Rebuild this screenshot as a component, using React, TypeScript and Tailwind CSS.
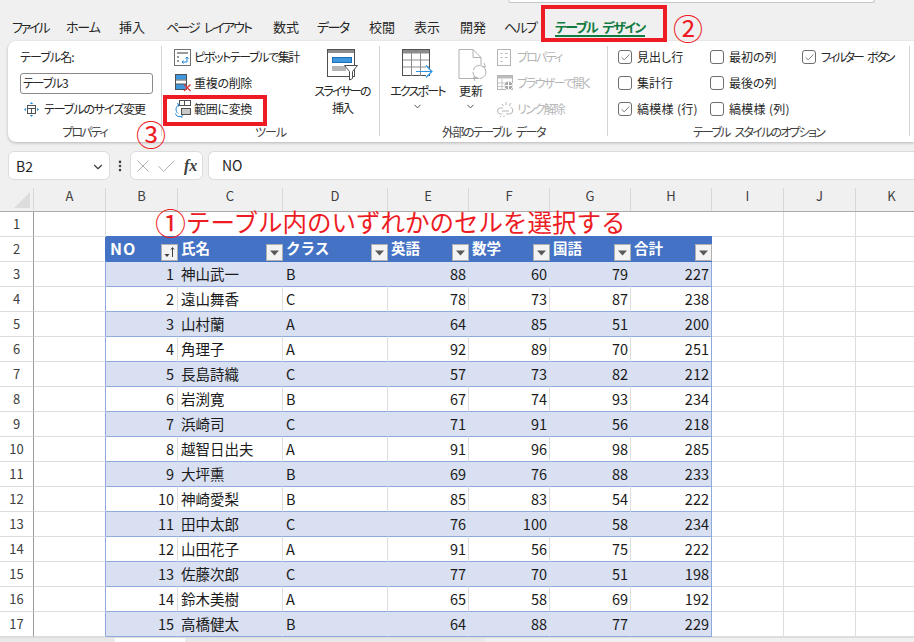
import type { ReactNode } from "react"
import { Check, ChevronDown, EllipsisVertical } from "lucide-react"

const tabs = [
  { name: "ファイル", cls: "w-[54px] tracking-[-2.2px]" },
  { name: "ホーム", cls: "w-[53px] tracking-[-1.2px]" },
  { name: "挿入", cls: "w-[47px]" },
  { name: "ページ レイアウト", cls: "w-[107px] tracking-[-1.9px] [word-spacing:4px]" },
  { name: "数式", cls: "w-[44px]" },
  { name: "データ", cls: "w-[52px] tracking-[-1.6px]" },
  { name: "校閲", cls: "w-[45px]" },
  { name: "表示", cls: "w-[46px]" },
  { name: "開発", cls: "w-[44px]" },
  { name: "ヘルプ", cls: "w-[51px] tracking-[-1.6px]" },
]

const columns = [
  { name: "A", cls: "w-[72px]" },
  { name: "B", cls: "w-[72px]" },
  { name: "C", cls: "w-[105px]" },
  { name: "D", cls: "w-[105px]" },
  { name: "E", cls: "w-[81px]" },
  { name: "F", cls: "w-[81px]" },
  { name: "G", cls: "w-[81px]" },
  { name: "H", cls: "w-[81px]" },
  { name: "I", cls: "w-[72px]" },
  { name: "J", cls: "w-[72px]" },
  { name: "K", cls: "w-[72px]" },
]

const students: [string, string, number, number, number, number][] = [
  ["神山武一", "B", 88, 60, 79, 227],
  ["遠山舞香", "C", 78, 73, 87, 238],
  ["山村蘭", "A", 64, 85, 51, 200],
  ["角理子", "A", 92, 89, 70, 251],
  ["長島詩織", "C", 57, 73, 82, 212],
  ["岩渕寛", "B", 67, 74, 93, 234],
  ["浜崎司", "C", 71, 91, 56, 218],
  ["越智日出夫", "A", 91, 96, 98, 285],
  ["大坪熏", "B", 69, 76, 88, 233],
  ["神崎愛梨", "B", 85, 83, 54, 222],
  ["田中太郎", "C", 76, 100, 58, 234],
  ["山田花子", "A", 91, 56, 75, 222],
  ["佐藤次郎", "C", 77, 70, 51, 198],
  ["鈴木美樹", "A", 65, 58, 69, 192],
  ["高橋健太", "B", 64, 88, 77, 229],
]

const headers = ["NO", "氏名", "クラス", "英語", "数学", "国語", "合計"]

const PivotIcon = () => (
  <svg width="17" height="17" viewBox="0 0 17 17" fill="none">
    <rect x="0.5" y="0.5" width="16" height="16" fill="#fff" stroke="#707070" />
    <rect x="3" y="3" width="11" height="2" fill="#9a9a9a" />
    <rect x="3" y="7" width="2" height="2" fill="#9a9a9a" />
    <rect x="3" y="11" width="2" height="2" fill="#9a9a9a" />
    <path d="M8 13h5V8M11.5 9.5 13 8l1.5 1.5M9.5 11.5 8 13l1.5 1.5" stroke="#1f86d6" />
  </svg>
)

const RemoveDupIcon = () => (
  <svg width="18" height="18" viewBox="0 0 18 18" fill="none">
    <rect x="1.5" y="0.5" width="11" height="15" fill="#fff" stroke="#505050" />
    <rect x="2" y="1" width="10" height="4.5" fill="#3f97dd" />
    <rect x="2" y="10" width="10" height="5" fill="#3f97dd" />
    <path d="M2 6h10M2 10h10" stroke="#505050" />
    <path d="m10 10.5 6.5 6.5M16.5 10.5 10 17" stroke="#e0393e" strokeWidth="1.4" />
  </svg>
)

const ConvertIcon = () => (
  <svg width="18" height="18" viewBox="0 0 18 18" fill="none">
    <rect x="5.5" y="0.5" width="5" height="5" fill="#fff" stroke="#505050" />
    <rect x="10.5" y="0.5" width="6" height="5" fill="#fff" stroke="#505050" />
    <rect x="7.5" y="8.5" width="9" height="6" fill="#c9c9c9" stroke="#505050" />
    <path d="M5 4.5C1.5 6.500 1 11 4 13.500M7 16.500c-3.500.7-5-1-5.500-3M5 4.500 3 3.500M5 4.500 4.200 6.700M7 16.500 9 15.500M7 16.500 8.500 18" stroke="#1f86d6" />
  </svg>
)

const SlicerIcon = () => (
  <svg width="31" height="32" viewBox="0 0 31 32" fill="none">
    <rect x="0.5" y="0.5" width="27" height="27" fill="#fff" stroke="#505050" />
    <rect x="1" y="1" width="26" height="3" fill="#8c8c8c" />
    <rect x="5.5" y="8.5" width="19" height="5" fill="#3f97dd" stroke="#1a6fb5" />
    <rect x="5" y="17" width="14" height="5" fill="#b5b5b5" />
    <path d="M17.5 16.5h13l-5 6v7l-3 1.500v-8.500z" fill="#fff" stroke="#505050" />
  </svg>
)

const ExportIcon = () => (
  <svg width="31" height="30" viewBox="0 0 31 30" fill="none">
    <rect x="0.5" y="0.5" width="27" height="26" fill="#fff" stroke="#505050" />
    <rect x="1" y="1" width="26" height="3.500" fill="#8c8c8c" />
    <path d="M1 11h26M1 18h26M9.500 4v23M18.500 4v23" stroke="#8c8c8c" />
    <path d="M14 22.500h15M24 16.500l6 6-6 6" stroke="#2f93de" strokeWidth="1.200" fill="#fff" />
  </svg>
)

const RefreshIcon = () => (
  <svg width="30" height="32" viewBox="0 0 30 32" fill="none">
    <path d="M1 .5h14l8 8v21H1z" fill="#fff" stroke="#b0b0b0" />
    <path d="M15 .5v8h8" stroke="#b0b0b0" />
    <circle cx="21.500" cy="23" r="6.500" fill="#fff" stroke="#b0b0b0" strokeDasharray="9 2" />
    <path d="m26 14 1.500 4-4-.5M17 32l-1.500-4 4 .5" stroke="#b0b0b0" />
  </svg>
)

const PropertyIcon = () => (
  <svg width="14" height="17" viewBox="0 0 14 17" fill="none">
    <rect x="0.5" y="0.5" width="13" height="16" stroke="#b5b5b5" fill="#fff" />
    <path d="M3.500 4.500h2M3.500 8.500h2M3.500 12.500h2M8 4.500h2.500M8 8.500h2.500" stroke="#b5b5b5" />
  </svg>
)

const BrowserIcon = () => (
  <svg width="17" height="16" viewBox="0 0 17 16" fill="none">
    <rect x="0.5" y="0.5" width="15" height="14" stroke="#b5b5b5" fill="#fff" />
    <rect x="1" y="1" width="14" height="2.500" fill="#bdbdbd" />
    <path d="M1 8h8M1 11.500h6M5 4v10" stroke="#c5c5c5" />
    <circle cx="11.500" cy="10.500" r="4.500" fill="#a9a9a9" stroke="#fff" />
    <path d="M7.500 10.500h8M11.500 6.500v8" stroke="#fff" />
  </svg>
)

const UnlinkIcon = () => (
  <svg width="17" height="17" viewBox="0 0 17 17" fill="none">
    <path d="M6 7H3.500a3 3 0 0 0 0 6H5M9 13h3.500a3.500 3.500 0 0 0 1-6.800" stroke="#b5b5b5" />
    <path d="M5 10h7M9 4V1M12 5l2-3M6.500 5 5 3M3 15l1 1M7 14.500V16" stroke="#b5b5b5" />
  </svg>
)

const ResizeIcon = () => (
  <svg width="15" height="15" viewBox="0 0 15 15" fill="none">
    <rect x="3.500" y="3.500" width="8" height="8" fill="#fff" stroke="#505050" />
    <path d="M3.500 6.500h8M7.500 6.500v5" stroke="#505050" />
    <path d="M7.500 0 5.800 2h3.400zM7.500 15l-1.700-2h3.400zM0 7.500 2 5.800v3.400zM15 7.500l-2-1.700v3.400z" fill="#2f93de" />
  </svg>
)

const FilterButton = ({ sorted }: { sorted?: boolean }) => (
  <div className="flex h-[17px] w-[17px] shrink-0 items-center justify-center gap-[1px] border border-[#b0b0b0] bg-[#f3f3f3]">
    {sorted ? (
      <svg width="13" height="13" viewBox="0 0 13 13">
        <path d="M1.500 8h5l-2.500 3z" fill="#404040" />
        <path d="M9.500 11V2M8 3.500l1.500-2 1.500 2" stroke="#404040" fill="none" />
      </svg>
    ) : (
      <svg width="9" height="6" viewBox="0 0 9 6">
        <path d="M0 .5h9L4.500 5.500z" fill="#595959" />
      </svg>
    )}
  </div>
)

const Group = ({ width, label, track, children }: { width: string; label: string; track: string; children: ReactNode }) => (
  <div className="flex shrink-0">
    <div className={`flex flex-col ${width}`}>
      <div className="flex h-[81px] pt-[3px]">{children}</div>
      <div className={`flex h-[20px] items-center justify-center whitespace-nowrap text-[12px] text-[#404040] ${track}`}>{label}</div>
    </div>
    <div className="mb-[6px] mt-[5px] w-px bg-[#d4d4d4]" />
  </div>
)

const RibbonRow = ({ icon, label, muted, track = "" }: { icon: ReactNode; label: string; muted?: boolean; track?: string }) => (
  <div className="flex h-[26px] items-center">
    <div className="flex w-[20px] shrink-0 justify-start">{icon}</div>
    <span className={`whitespace-nowrap ${track} ${muted ? "text-[#b5b5b5]" : "text-[#262626]"}`}>{label}</span>
  </div>
)

const BigButton = ({ icon, lines, width, chevron, track = "", iconCls = "" }: { icon: ReactNode; lines: string[]; width: string; chevron?: boolean; track?: string; iconCls?: string }) => (
  <div className={`flex shrink-0 flex-col items-center pt-[5px] leading-[17px] ${width}`}>
    <div className={`flex h-[33px] items-start ${iconCls}`}>{icon}</div>
    <div className={`flex flex-col items-center whitespace-nowrap text-[#262626] ${track}`}>
      {lines.map((line) => (
        <span key={line}>{line}</span>
      ))}
      {chevron && <ChevronDown size={11} className="mt-[2px] text-[#404040]" />}
    </div>
  </div>
)

const CheckOption = ({ label, checked, track = "" }: { label: string; checked?: boolean; track?: string }) => (
  <div className="flex h-[26px] items-center gap-[5px] whitespace-nowrap text-[#262626]">
    <div className="flex h-[14px] w-[14px] shrink-0 items-center justify-center rounded-[3px] border border-[#6e6e6e] bg-white">
      {checked && <Check size={11} strokeWidth={1.500} className="text-[#404040]" />}
    </div>
    <span className={track}>{label}</span>
  </div>
)

const Ribbon = () => (
  <div className="ml-[8px] flex h-[101px] rounded-l-lg bg-white text-[12px] shadow-[0_1px_3px_rgba(0,0,0,0.25)]">
    <Group width="w-[153px]" label="プロパティ" track="tracking-[-1.8px]">
      <div className="flex flex-col pl-[12px]">
        <div className="flex h-[26px] items-center tracking-[-0.9px] text-[#262626]">テーブル名:</div>
        <div className="flex h-[26px] items-center">
          <div className="flex h-[21px] w-[133px] items-center rounded-[3px] border border-[#8a8a8a] pl-[2px] tracking-[-1.2px] text-[#262626]">テーブル3</div>
        </div>
        <div className="flex h-[26px] items-center gap-[5px] whitespace-nowrap pl-[4px] text-[#262626]">
          <ResizeIcon />
          <span className="tracking-[-1.1px]">テーブルのサイズ変更</span>
        </div>
      </div>
    </Group>
    <Group width="w-[217px]" label="ツール" track="tracking-[-1px]">
      <div className="flex w-[145px] shrink-0 flex-col pl-[12px]">
        <RibbonRow icon={<PivotIcon />} label="ピボットテーブルで集計" track="tracking-[-1.4px]" />
        <RibbonRow icon={<RemoveDupIcon />} label="重複の削除" track="tracking-[-0.3px]" />
        <RibbonRow icon={<ConvertIcon />} label="範囲に変換" track="tracking-[-0.3px]" />
      </div>
      <BigButton icon={<SlicerIcon />} lines={["スライサーの", "挿入"]} width="w-[70px]" track="tracking-[-1.9px]" />
    </Group>
    <Group width="w-[227px]" label="外部のテーブル データ" track="tracking-[-1.5px] [word-spacing:4px]">
      <div className="w-[10px] shrink-0" />
      <BigButton icon={<ExportIcon />} lines={["エクスポート"]} width="w-[55px]" chevron track="tracking-[-1.8px]" />
      <BigButton icon={<RefreshIcon />} lines={["更新"]} width="w-[52px]" chevron iconCls="ml-[4px]" />
      <div className="flex flex-col">
        <RibbonRow icon={<PropertyIcon />} label="プロパティ" muted track="tracking-[-1.8px]" />
        <RibbonRow icon={<BrowserIcon />} label="ブラウザーで開く" muted track="tracking-[-1.6px]" />
        <RibbonRow icon={<UnlinkIcon />} label="リンク解除" muted track="tracking-[-1.6px]" />
      </div>
    </Group>
    <Group width="w-[301px]" label="テーブル スタイルのオプション" track="tracking-[-1.8px] [word-spacing:4px]">
      <div className="flex pl-[10px]">
        <div className="flex w-[92px] flex-col">
          <CheckOption label="見出し行" checked />
          <CheckOption label="集計行" />
          <CheckOption label="縞模様 (行)" checked track="tracking-[0.3px]" />
        </div>
        <div className="flex w-[92px] flex-col">
          <CheckOption label="最初の列" />
          <CheckOption label="最後の列" />
          <CheckOption label="縞模様 (列)" track="tracking-[0.3px]" />
        </div>
        <div className="flex flex-col">
          <CheckOption label="フィルター ボタン" checked track="tracking-[-2.2px] [word-spacing:4px]" />
        </div>
      </div>
    </Group>
  </div>
)

const FormulaBar = () => (
  <div className="mt-[9px] flex h-[29px] items-stretch pl-[8px]">
    <div className="flex w-[102px] items-center justify-between rounded-md border border-[#dcdcdc] bg-white pl-[7px] pr-[4px] pt-[2px] text-[14px] text-[#262626]">
      B2
      <ChevronDown size={14} className="text-[#404040]" />
    </div>
    <div className="flex w-[20px] items-center justify-center text-[#404040]">
      <EllipsisVertical size={14} strokeWidth={2.500} />
    </div>
    <div className="flex w-[73px] items-center gap-[9px] rounded-md border border-[#dcdcdc] bg-white pl-[6px]">
      <svg width="12" height="12" viewBox="0 0 12 12" fill="none" stroke="#b0b0b0">
        <path d="m.5.5 11 11M11.500.5l-11 11" />
      </svg>
      <svg width="17" height="12" viewBox="0 0 17 12" fill="none" stroke="#b0b0b0">
        <path d="m.5 6 5 5.500L16.500.5" />
      </svg>
      <span className="font-['Liberation_Serif'] text-[16px] font-bold italic leading-none text-[#404040]">fx</span>
    </div>
    <div className="ml-[5px] flex flex-1 items-center rounded-l-md border border-r-0 border-[#dcdcdc] bg-white pl-[13px] text-[14px] text-[#262626]">NO</div>
  </div>
)

const ColumnHeader = () => (
  <div className="mt-[8px] flex h-[24px] border-b border-[#ababab] text-[13px] text-[#404040]">
    <div className="flex w-[34px] shrink-0 items-end justify-end border-r border-[#d8d8d8] pb-[3px] pr-[3px]">
      <svg width="16" height="16" viewBox="0 0 16 16">
        <path d="M16 0v16H0z" fill="#dcdcdc" />
      </svg>
    </div>
    {columns.map((col) => (
      <div key={col.name} className={`flex shrink-0 items-center justify-center border-r border-[#d8d8d8] pb-[8px] ${col.cls}`}>
        {col.name}
      </div>
    ))}
  </div>
)

const RowHead = ({ n }: { n: number }) => (
  <div className="flex w-[34px] shrink-0 items-center justify-center border-b border-r border-b-[#dcdcdc] border-r-[#9c9c9c] text-[13px] text-[#404040]">{n}</div>
)

const Plain = ({ cls, border = "border-r-[#dedede]", bottom = "border-b-[#dedede]" }: { cls: string; border?: string; bottom?: string }) => (
  <div className={`shrink-0 border-b border-r ${cls} ${border} ${bottom}`} />
)

const TailCells = () => (
  <>
    <Plain cls="w-[72px]" />
    <Plain cls="w-[72px]" />
    <Plain cls="w-[72px]" />
  </>
)

const TitleRow = () => (
  <div className="flex h-[25px]">
    <RowHead n={1} />
    <Plain cls="w-[72px]" />
    <div className="w-[606px] shrink-0 border-b border-b-[#4472c4]" />
    <TailCells />
  </div>
)

const HeaderRow = () => (
  <div className="flex h-[25px]">
    <RowHead n={2} />
    <Plain cls="w-[72px]" border="border-r-[#4472c4]" />
    {headers.map((title, i) => (
      <div
        key={title}
        className={`flex shrink-0 items-start justify-between bg-[#4472c4] pl-[3px] text-[14.500px] font-bold leading-[22px] text-white [font-feature-settings:normal] ${columns[i + 1].cls}`}
      >
        <span className={i === 0 ? "pl-[1px] text-[16px] tracking-[1px]" : ""}>{title}</span>
        <div className="mt-[7px]">
          <FilterButton sorted={i === 0} />
        </div>
      </div>
    ))}
    <TailCells />
  </div>
)

const DataRow = ({ no, student }: { no: number; student: (typeof students)[number] }) => {
  const band = no % 2 === 1
  const [name, cls, ...scores] = student
  const fill = band ? "border-r-[#d9e0f2] bg-[#d9e0f2]" : "border-r-[#dedede] bg-white"
  const cellBase = `flex shrink-0 items-center border-b border-r border-b-[#8ea9db] pb-[1px] ${fill}`
  return (
    <div className="flex h-[25px]">
      <RowHead n={no + 2} />
      <Plain cls="w-[72px]" border="border-r-[#8ea9db]" />
      <div className={`${cellBase} w-[72px] justify-end pr-[3px]`}>{no}</div>
      <div className={`${cellBase} w-[105px] pl-[3px]`}>{name}</div>
      <div className={`${cellBase} w-[105px] pl-[3px]`}>{cls}</div>
      {scores.map((score, i) => (
        <div
          key={i}
          className={`flex w-[81px] shrink-0 items-center justify-end border-b border-r border-b-[#8ea9db] pb-[1px] pr-[2px] ${i === 3 ? `border-r-[#8ea9db] ${band ? "bg-[#d9e0f2]" : "bg-white"}` : fill}`}
        >
          {score}
        </div>
      ))}
      <TailCells />
    </div>
  )
}

const SheetTabs = () => (
  <div className="flex h-[5px] border-t border-[#dcdcdc]">
    <div className="w-[115px] rounded-tr-md bg-[#e8e8e8]" />
    <div className="w-[70px] bg-white" />
    <div className="w-[300px] rounded-tl-md bg-[#e8e8e8]" />
  </div>
)

export default function App() {
  return (
    <div className="relative h-[642px] w-[914px] overflow-hidden bg-[#f0f0f0] font-['Noto_Sans_CJK_JP',sans-serif] [font-feature-settings:'palt']">
      <div className="h-[17px] pl-[508px]">
        <div className="h-[3px] w-[367px] rounded-b border border-t-0 border-[#c8c8c8] bg-white" />
      </div>
      <div className="flex h-[24px] items-center pb-[4px] pl-[12px] text-[13px] text-[#262626]">
        {tabs.map((tab) => (
          <span key={tab.name} className={`shrink-0 whitespace-nowrap ${tab.cls}`}>
            {tab.name}
          </span>
        ))}
        <span className="relative shrink-0 whitespace-nowrap font-bold tracking-[-1.6px] text-[#107c41] [word-spacing:4px]">
          テーブル デザイン
          <span className="absolute bottom-0 left-0 right-0 h-[2px] bg-[#107c41]" />
        </span>
      </div>
      <Ribbon />
      <FormulaBar />
      <ColumnHeader />
      <div className="bg-white text-[14.500px] text-[#1a1a1a]">
        <TitleRow />
        <HeaderRow />
        {students.map((student, i) => (
          <DataRow key={student[0]} no={i + 1} student={student} />
        ))}
      </div>
      <SheetTabs />

      {/* 赤い注釈 */}
      <div className="absolute left-[541px] top-[5px] h-[37px] w-[126px] border-4 border-[#ed1c24]" />
      <div className="absolute left-[163px] top-[95px] h-[31px] w-[104px] border-4 border-[#ed1c24]" />
      <span className="absolute left-[673px] top-[7px] text-[30px] leading-[40px] text-[#ed1c24]">②</span>
      <span className="absolute left-[136px] top-[113px] text-[30px] leading-[40px] text-[#ed1c24]">③</span>
      <div className="absolute left-[155px] top-[208px] flex items-center whitespace-nowrap text-[#ed1c24] [font-feature-settings:normal]">
        <span className="text-[31px] leading-[28px]">①</span>
        <span className="text-[24.500px] leading-[28px]">テーブル内のいずれかのセルを選択する</span>
      </div>
    </div>
  )
}
